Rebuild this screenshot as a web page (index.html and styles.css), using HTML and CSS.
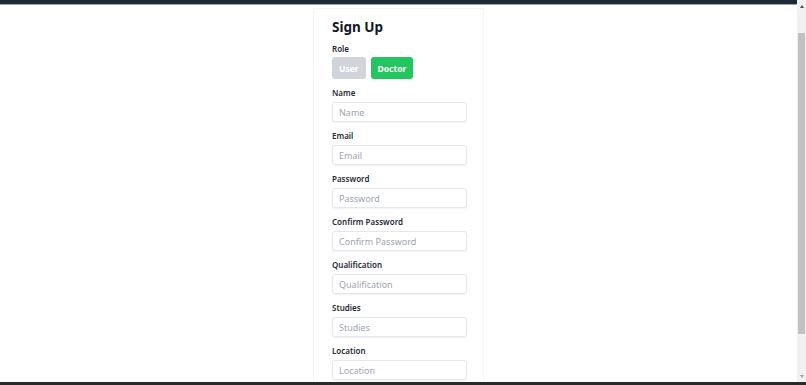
FILE: index.html
```html
<!DOCTYPE html>
<html>
    <head>
        <title>Sign Up</title>
        <link rel="stylesheet" href="styles.css">
    </head>
    <body>
        <div class="window">
            <div class="page">
                <div class="topbar"></div>
                <div class="content">
                    <form class="card">
                        <h1>Sign Up</h1>
                        <div class="field">
                            <label>Role</label>
                            <div class="roles">
                                <button type="button" class="role">User</button>
                                <button type="button" class="role active">Doctor</button>
                            </div>
                        </div>
                        <div class="field">
                            <label>Name</label>
                            <input type="text" placeholder="Name">
                        </div>
                        <div class="field">
                            <label>Email</label>
                            <input type="email" placeholder="Email">
                        </div>
                        <div class="field">
                            <label>Password</label>
                            <input type="password" placeholder="Password">
                        </div>
                        <div class="field">
                            <label>Confirm Password</label>
                            <input type="password" placeholder="Confirm Password">
                        </div>
                        <div class="field">
                            <label>Qualification</label>
                            <input type="text" placeholder="Qualification">
                        </div>
                        <div class="field">
                            <label>Studies</label>
                            <input type="text" placeholder="Studies">
                        </div>
                        <div class="field">
                            <label>Location</label>
                            <input type="text" placeholder="Location">
                        </div>
                    </form>
                </div>
            </div>
            <div class="scrollbar">
                <div class="arrow up"></div>
                <div class="track"><div class="thumb"></div></div>
                <div class="arrow down"></div>
            </div>
        </div>
        <div class="taskbar"></div>
    </body>
</html>
```

FILE: styles.css
```css
* {
    box-sizing: border-box;
}
html, body {
    margin: 0;
    height: 100%;
    overflow: hidden;
}
body {
    font-family: "Noto Sans", "Open Sans", sans-serif;
    color: #1f2937;
    background: #fff;
    display: flex;
    flex-direction: column;
}
.window {
    flex: 1;
    display: flex;
    min-height: 0;
}
.page {
    flex: 1;
    display: flex;
    flex-direction: column;
    min-width: 0;
}
.topbar {
    height: 5px;
    background: #1f2937;
    border-bottom: 1px solid #9ca3af;
}
.content {
    flex: 1;
    overflow: hidden;
    display: flex;
    justify-content: center;
    padding-top: 3px;
}
.card {
    width: 171px;
    padding: 9px 17px 20px 18px;
    border: 1px solid #f4f5f6;
    border-bottom: none;
    background: #fff;
    display: flex;
    flex-direction: column;
    gap: 8px;
}
h1 {
    margin: 0 0 -1px;
    font-size: 13.5px;
    line-height: 18px;
    font-weight: 700;
    color: #111827;
}
.field {
    display: flex;
    flex-direction: column;
}
label {
    font-size: 8px;
    line-height: 12px;
    font-weight: 600;
    color: #1f2937;
    margin-bottom: 3px;
}
.roles {
    display: flex;
    gap: 5px;
    margin-top: -1px;
}
.role {
    font-family: inherit;
    font-size: 8.5px;
    font-weight: 700;
    height: 22px;
    padding: 0 7px;
    border: none;
    border-radius: 3px;
    color: #fff;
    background: #d1d5db;
}
.role.active {
    background: #22c55e;
}
input {
    font-family: inherit;
    font-size: 9px;
    height: 20px;
    width: 135px;
    padding: 0 6px;
    border: 1px solid #e5e7eb;
    border-radius: 3px;
    box-shadow: 0 1px 2px rgba(0, 0, 0, 0.06);
    color: #374151;
}
input::placeholder {
    color: #9ca3af;
}
.scrollbar {
    width: 9px;
    background: #f1f1f1;
    display: flex;
    flex-direction: column;
    align-items: center;
}
.arrow {
    height: 12px;
    width: 9px;
    display: flex;
    align-items: center;
    justify-content: center;
}
.arrow::before {
    content: "";
    border-left: 2.5px solid transparent;
    border-right: 2.5px solid transparent;
}
.up::before {
    border-bottom: 3px solid #505050;
}
.down::before {
    border-top: 3px solid #a3a3a3;
}
.track {
    flex: 1;
    width: 100%;
    padding-top: 21px;
    padding-bottom: 36px;
}
.thumb {
    height: 100%;
    margin: 0 1px;
    background: #c1c1c1;
}
.taskbar {
    height: 3px;
    background: #2b2a29;
}
```
